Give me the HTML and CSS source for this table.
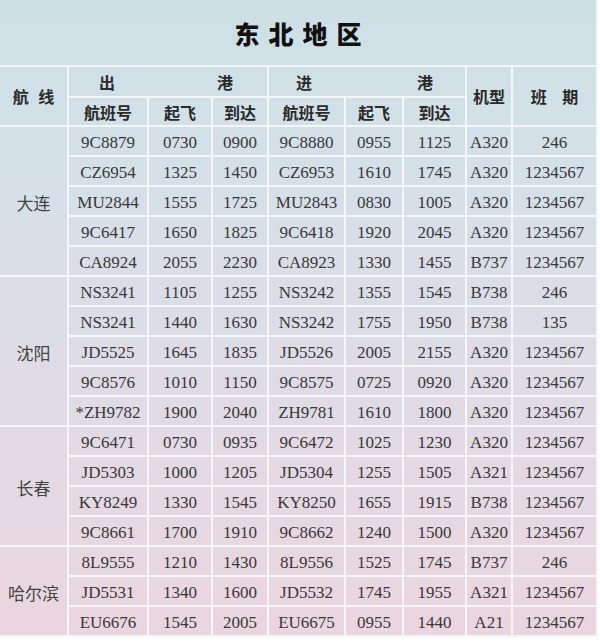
FILE: index.html
```html
<!DOCTYPE html>
<html lang="zh-CN">
<head>
<meta charset="utf-8">
<title>东北地区</title>
<link rel="stylesheet" href="styles.css">
</head>
<body>
<table class="sched">
  <colgroup>
    <col class="c-route"><col class="c-fno1"><col class="c-t1"><col class="c-t2">
    <col class="c-fno2"><col class="c-t3"><col class="c-t4"><col class="c-type"><col class="c-days">
  </colgroup>
  <thead>
    <tr class="r-title"><th colspan="9" class="title">东北地区</th></tr>
    <tr class="r-h1">
      <th rowspan="2" class="hd route-h">航 线</th>
      <th colspan="3" class="hd"><div class="spread out"><span>出</span><span>港</span></div></th>
      <th colspan="3" class="hd"><div class="spread in"><span>进</span><span>港</span></div></th>
      <th rowspan="2" class="hd">机型</th>
      <th rowspan="2" class="hd days-h">班 期</th>
    </tr>
    <tr class="r-h2">
      <th class="hd">航班号</th><th class="hd">起飞</th><th class="hd">到达</th>
      <th class="hd">航班号</th><th class="hd">起飞</th><th class="hd">到达</th>
    </tr>
  </thead>
  <tbody>
    <tr><td rowspan="5" class="city">大连</td><td>9C8879</td><td>0730</td><td>0900</td><td>9C8880</td><td>0955</td><td>1125</td><td>A320</td><td>246</td></tr>
    <tr><td>CZ6954</td><td>1325</td><td>1450</td><td>CZ6953</td><td>1610</td><td>1745</td><td>A320</td><td>1234567</td></tr>
    <tr><td>MU2844</td><td>1555</td><td>1725</td><td>MU2843</td><td>0830</td><td>1005</td><td>A320</td><td>1234567</td></tr>
    <tr><td>9C6417</td><td>1650</td><td>1825</td><td>9C6418</td><td>1920</td><td>2045</td><td>A320</td><td>1234567</td></tr>
    <tr><td>CA8924</td><td>2055</td><td>2230</td><td>CA8923</td><td>1330</td><td>1455</td><td>B737</td><td>1234567</td></tr>
    <tr><td rowspan="5" class="city">沈阳</td><td>NS3241</td><td>1105</td><td>1255</td><td>NS3242</td><td>1355</td><td>1545</td><td>B738</td><td>246</td></tr>
    <tr><td>NS3241</td><td>1440</td><td>1630</td><td>NS3242</td><td>1755</td><td>1950</td><td>B738</td><td>135</td></tr>
    <tr><td>JD5525</td><td>1645</td><td>1835</td><td>JD5526</td><td>2005</td><td>2155</td><td>A320</td><td>1234567</td></tr>
    <tr><td>9C8576</td><td>1010</td><td>1150</td><td>9C8575</td><td>0725</td><td>0920</td><td>A320</td><td>1234567</td></tr>
    <tr><td>*ZH9782</td><td>1900</td><td>2040</td><td>ZH9781</td><td>1610</td><td>1800</td><td>A320</td><td>1234567</td></tr>
    <tr><td rowspan="4" class="city">长春</td><td>9C6471</td><td>0730</td><td>0935</td><td>9C6472</td><td>1025</td><td>1230</td><td>A320</td><td>1234567</td></tr>
    <tr><td>JD5303</td><td>1000</td><td>1205</td><td>JD5304</td><td>1255</td><td>1505</td><td>A321</td><td>1234567</td></tr>
    <tr><td>KY8249</td><td>1330</td><td>1545</td><td>KY8250</td><td>1655</td><td>1915</td><td>B738</td><td>1234567</td></tr>
    <tr><td>9C8661</td><td>1700</td><td>1910</td><td>9C8662</td><td>1240</td><td>1500</td><td>A320</td><td>1234567</td></tr>
    <tr><td rowspan="3" class="city">哈尔滨</td><td>8L9555</td><td>1210</td><td>1430</td><td>8L9556</td><td>1525</td><td>1745</td><td>B737</td><td>246</td></tr>
    <tr><td>JD5531</td><td>1340</td><td>1600</td><td>JD5532</td><td>1745</td><td>1955</td><td>A321</td><td>1234567</td></tr>
    <tr><td>EU6676</td><td>1545</td><td>2005</td><td>EU6675</td><td>0955</td><td>1440</td><td>A21</td><td>1234567</td></tr>
  </tbody>
</table>
</body>
</html>
```
FILE: styles.css
```css
html, body {
  margin: 0;
  padding: 0;
  background: #ffffff;
}

.sched {
  width: 597px;
  table-layout: fixed;
  border-collapse: collapse;
  background: linear-gradient(to bottom, #cde0e6 0%, #d4e0e8 25%, #dcdde6 50%, #e4d9e3 75%, #ebd5df 100%);
  font-family: "Liberation Serif", "Noto Sans CJK SC", serif;
  color: #383838;
}

.c-route { width: 68px; }
.c-fno1 { width: 80px; }
.c-t1 { width: 64px; }
.c-t2 { width: 56px; }
.c-fno2 { width: 77px; }
.c-t3 { width: 58px; }
.c-t4 { width: 63px; }
.c-type { width: 46px; }
.c-days { width: 85px; }

.sched th,
.sched td {
  border: 2px solid #f4f6f8;
  padding: 0;
  text-align: center;
  vertical-align: middle;
}

.sched tr:first-child th { border-top: none; }
.sched th:first-child, .sched td.city { border-left: none; }

.r-title { height: 66px; }
.r-h1 { height: 31px; }
.r-h2 { height: 29px; }
.sched tbody tr { height: 30px; }

.title {
  font-family: "Noto Sans CJK SC", sans-serif;
  font-weight: 900;
  font-size: 25px;
  letter-spacing: 9px;
  text-indent: 9px;
  padding-top: 3px;
  color: #111111;
}

.hd {
  font-family: "Noto Sans CJK SC", sans-serif;
  font-weight: 600;
  font-size: 16px;
  color: #2a2a2a;
}

.route-h { word-spacing: 6px; }
.days-h { word-spacing: 12px; }

.spread {
  display: flex;
  justify-content: space-between;
}
.spread.out { padding: 0 34px 0 30px; }
.spread.in { padding: 0 32px 0 27px; }

.sched td {
  font-size: 17px;
  padding-top: 4px;
}

.sched td.city {
  font-family: "Noto Sans CJK SC", sans-serif;
  font-size: 17px;
  padding-top: 2px;
  color: #444444;
}
```
